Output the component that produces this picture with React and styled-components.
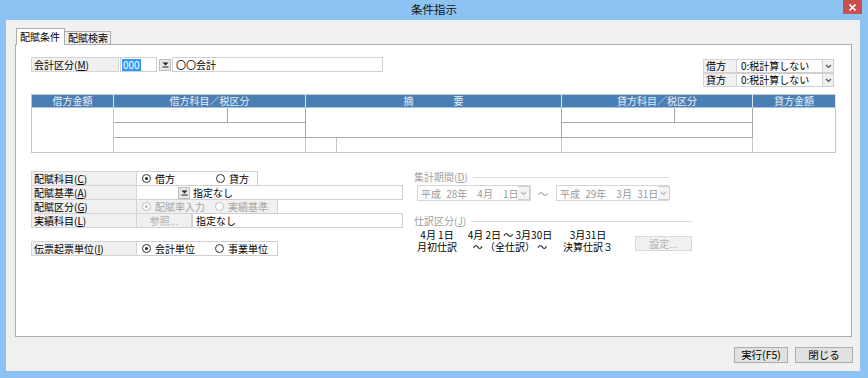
import React from "react";
import styled, { createGlobalStyle } from "styled-components";

const GlobalStyle = createGlobalStyle`
  html, body {
    margin: 0;
    padding: 0;
  }
  body {
    font-family: "Noto Sans CJK JP", "Liberation Sans", sans-serif;
    font-size: 10px;
    color: #000;
    background: #fff;
  }
  * {
    box-sizing: border-box;
  }
`;

const Window = styled.div`
  width: 868px;
  height: 378px;
  background: #8cc3f3;
  display: flex;
  flex-direction: column;
`;

const TitleBar = styled.div`
  height: 20px;
  display: grid;
  grid-template-columns: 1fr auto 1fr;
  align-items: start;
`;

const Title = styled.div`
  grid-column: 2;
  line-height: 19px;
  font-size: 11.5px;
  color: #111;
`;

const CloseButton = styled.div`
  grid-column: 3;
  justify-self: end;
  margin-right: 6px;
  width: 19px;
  height: 14px;
  background: #c75050;
  display: flex;
  align-items: center;
  justify-content: center;
`;

const Client = styled.div`
  flex: 1;
  margin: 0 8px 7px 6px;
  background: #f0f0f0;
  padding: 8px 8px 0 9px;
  display: flex;
  flex-direction: column;
`;

const TabRow = styled.div`
  display: flex;
  align-items: flex-end;
  height: 16px;
  padding-left: 1px;
`;

const Tab = styled.div`
  position: relative;
  z-index: 1;
  height: ${(p) => (p.$active ? "17px" : "13px")};
  margin-bottom: ${(p) => (p.$active ? "-1px" : "0")};
  width: ${(p) => p.$w}px;
  background: ${(p) => (p.$active ? "#fff" : "#f0f0f0")};
  border: 1px solid #adadad;
  border-bottom: none;
  border-left: ${(p) => (p.$active ? "1px solid #adadad" : "none")};
  padding-left: 3px;
  line-height: ${(p) => (p.$active ? "15px" : "12px")};
  white-space: nowrap;
`;

const Panel = styled.div`
  height: 293px;
  background: #fff;
  border: 1px solid #adadad;
  padding: 12px 16px 0 15px;
`;

const TopRow = styled.div`
  display: flex;
  justify-content: space-between;
  align-items: flex-start;
`;

const FieldRow = styled.div`
  display: flex;
  align-items: center;
  height: 15px;
`;

const LabelBox = styled.div`
  width: ${(p) => p.$w}px;
  height: ${(p) => p.$h || 15}px;
  background: #f0f0f0;
  border: 1px solid #d4d4d4;
  padding-left: 2px;
  line-height: ${(p) => (p.$h || 15) - 2}px;
  white-space: nowrap;
  flex-shrink: 0;
`;

const TextBox = styled.div`
  width: ${(p) => p.$w}px;
  height: ${(p) => p.$h || 15}px;
  margin-left: ${(p) => p.$ml || 0}px;
  background: #fff;
  border: 1px solid #cfcfcf;
  border-left-width: ${(p) => (p.$noLeft ? 0 : 1)}px;
  padding-left: ${(p) => (p.$pl === undefined ? 2 : p.$pl)}px;
  line-height: ${(p) => (p.$h || 15) - 2}px;
  display: flex;
  align-items: center;
  white-space: nowrap;
  flex-shrink: 0;
`;

const Selected = styled.span`
  background: #3399ff;
  color: #fff;
  line-height: 12px;
  padding: 0 1px;
`;

const DropButton = styled.div`
  width: 12px;
  height: 12px;
  margin-left: ${(p) => p.$ml || 0}px;
  margin-right: ${(p) => p.$mr || 0}px;
  background: #e6e6e6;
  border: 1px solid #bdbdbd;
  display: flex;
  align-items: center;
  justify-content: center;
  flex-shrink: 0;
`;

const TaxBlock = styled.div`
  margin-top: 2px;
  margin-right: 1px;
  display: flex;
  flex-direction: column;
`;

const TaxRow = styled.div`
  display: flex;
  height: 14px;
`;

const TaxSelect = styled.div`
  width: 86px;
  height: 14px;
  border: 1px solid #cfcfcf;
  border-left: none;
  padding-left: 4px;
  line-height: 12px;
  white-space: nowrap;
`;

const ArrowBox = styled.div`
  width: ${(p) => p.$w || 11}px;
  height: ${(p) => p.$h || 14}px;
  border: 1px solid #cfcfcf;
  border-left: none;
  background: ${(p) => (p.$dim ? "#f4f4f4" : "#f0f0f0")};
  display: flex;
  align-items: center;
  justify-content: center;
  flex-shrink: 0;
`;

const Grid = styled.div`
  margin-top: 7px;
  width: 804px;
  display: grid;
  grid-template-columns: 82px 114px 78px 31px 225px 113px 78px 83px;
  grid-template-rows: 13px 15px 15px 15px;
  border-left: 1px solid #c8c8c8;
  border-top: 1px solid #c8c8c8;
`;

const HeadCell = styled.div`
  grid-column: ${(p) => p.$col};
  grid-row: 1;
  background: #4a7fb4;
  color: #e6eefa;
  text-align: center;
  line-height: 12px;
  border-right: 1px solid #d8e4f0;
  border-bottom: 1px solid #a9c3dd;
  white-space: nowrap;
`;

const Cell = styled.div`
  grid-column: ${(p) => p.$col};
  grid-row: ${(p) => p.$row};
  background: #fff;
  border-right: 1px solid ${(p) => (p.$edge ? "#c8c8c8" : "#a8a8a8")};
  border-bottom: 1px solid ${(p) => (p.$edge ? "#c8c8c8" : "#a8a8a8")};
`;

const Lower = styled.div`
  margin-top: 18px;
  display: flex;
  align-items: flex-start;
`;

const LeftForm = styled.div`
  width: 372px;
  display: flex;
  flex-direction: column;
`;

const FormRow = styled.div`
  display: flex;
  height: 15px;
  flex-shrink: 0;
  margin-top: ${(p) => p.$mt || 0}px;
`;

const RadioBox = styled.div`
  width: ${(p) => p.$w}px;
  height: 15px;
  border: 1px solid #cfcfcf;
  border-left: none;
  background: ${(p) => (p.$disabled ? "#f0f0f0" : "#fff")};
  color: ${(p) => (p.$disabled ? "#a6a6a6" : "#000")};
  display: grid;
  grid-template-columns: ${(p) => p.$cols};
  align-items: center;
  padding-left: 5px;
  white-space: nowrap;
`;

const RadioItem = styled.span`
  display: inline-flex;
  align-items: center;
  gap: 4px;
  line-height: 12px;
`;

const RadioCircle = styled.span`
  width: 9px;
  height: 9px;
  border-radius: 50%;
  border: 1px solid ${(p) => (p.$disabled ? "#bdbdbd" : "#333")};
  background: #fff;
  display: inline-flex;
  align-items: center;
  justify-content: center;
  &::after {
    content: "";
    width: 3px;
    height: 3px;
    border-radius: 50%;
    background: ${(p) => (p.$checked ? (p.$disabled ? "#bdbdbd" : "#222") : "transparent")};
  }
`;

const RefButton = styled.div`
  width: 55px;
  height: 15px;
  background: #f0f0f0;
  border: 1px solid #d4d4d4;
  border-left: none;
  color: #b0b0b0;
  text-align: center;
  line-height: 13px;
  flex-shrink: 0;
`;

const RightForm = styled.div`
  margin-left: 11px;
  width: 278px;
  display: flex;
  flex-direction: column;
  color: #a0a0a0;
`;

const GroupHeader = styled.div`
  width: ${(p) => p.$w}px;
  margin-top: ${(p) => p.$mt || 0}px;
  display: flex;
  align-items: center;
  height: 12px;
  line-height: 12px;
  white-space: nowrap;
  &::after {
    content: "";
    flex: 1;
    margin-left: 5px;
    border-top: 1px solid #dcdcdc;
  }
`;

const DateRow = styled.div`
  display: flex;
  align-items: center;
  margin-top: 2px;
  margin-left: 3px;
`;

const DateSelect = styled.div`
  width: ${(p) => p.$w}px;
  height: 16px;
  border: 1px solid #d6d6d6;
  display: flex;
  align-items: center;
  padding-left: 3px;
  white-space: nowrap;
  color: #9a9a9a;
`;

const DateText = styled.span`
  flex: 1;
  word-spacing: 3px;
`;

const Tilde = styled.span`
  margin: 0 8px 0 7px;
  color: #9a9a9a;
`;

const PhaseRow = styled.div`
  display: flex;
  align-items: flex-start;
  margin-top: 2px;
  margin-left: 2px;
`;

const PhaseGrid = styled.div`
  display: grid;
  grid-template-columns: 42px 98px 52px;
  column-gap: 3px;
  color: #000;
  line-height: 12px;
  text-align: center;
  white-space: nowrap;
`;

const SetButton = styled.div`
  margin-left: auto;
  margin-top: 7px;
  width: 57px;
  height: 15px;
  background: #f0f0f0;
  border: 1px solid #dadada;
  color: #b0b0b0;
  text-align: center;
  line-height: 13px;
`;

const Footer = styled.div`
  display: flex;
  justify-content: flex-end;
  gap: 7px;
  padding-top: 10px;
  margin-right: -1px;
`;

const DialogButton = styled.div`
  width: ${(p) => p.$w}px;
  height: 16px;
  background: #e1e1e1;
  border: 1px solid #adadad;
  text-align: center;
  line-height: 14px;
  font-size: 10.5px;
`;

const Key = styled.u`
  text-underline-offset: 1px;
`;

const DropGlyph = () => (
  <svg width="7" height="7" viewBox="0 0 7 7">
    <path d="M0.5 1.5h6L3.5 4.5z" fill="#222" />
    <rect x="0.5" y="5.5" width="6" height="1" fill="#222" />
  </svg>
);

const Chevron = ({ color = "#555" }) => (
  <svg width="7" height="5" viewBox="0 0 7 5">
    <path d="M1 1l2.5 2.5L6 1" stroke={color} strokeWidth="1.2" fill="none" />
  </svg>
);

const Radio = ({ checked, disabled, children }) => (
  <RadioItem>
    <RadioCircle $checked={checked} $disabled={disabled} />
    {children}
  </RadioItem>
);

const App = () => {
  return (
    <>
      <GlobalStyle />
      <Window>
        <TitleBar>
          <Title>条件指示</Title>
          <CloseButton>
            <svg width="7" height="7" viewBox="0 0 7 7">
              <path d="M0.5 0.5l6 6M6.5 0.5l-6 6" stroke="#fff" strokeWidth="1.6" />
            </svg>
          </CloseButton>
        </TitleBar>
        <Client>
          <TabRow>
            <Tab $active $w={49}>配賦条件</Tab>
            <Tab $w={46}>配賦検索</Tab>
          </TabRow>
          <Panel>
            <TopRow>
              <FieldRow>
                <LabelBox $w={88}>
                  会計区分(<Key>M</Key>)
                </LabelBox>
                <TextBox $w={37} $ml={1} $pl={1}>
                  <Selected>000</Selected>
                </TextBox>
                <DropButton $ml={2} $mr={1}>
                  <DropGlyph />
                </DropButton>
                <TextBox $w={211} $pl={3}>〇〇会計</TextBox>
              </FieldRow>
              <TaxBlock>
                <TaxRow>
                  <LabelBox $w={34} $h={14}>借方</LabelBox>
                  <TaxSelect>0:税計算しない</TaxSelect>
                  <ArrowBox>
                    <Chevron />
                  </ArrowBox>
                </TaxRow>
                <TaxRow>
                  <LabelBox $w={34} $h={14}>貸方</LabelBox>
                  <TaxSelect>0:税計算しない</TaxSelect>
                  <ArrowBox>
                    <Chevron />
                  </ArrowBox>
                </TaxRow>
              </TaxBlock>
            </TopRow>

            <Grid>
              <HeadCell $col="1">借方金額</HeadCell>
              <HeadCell $col="2 / 4">借方科目／税区分</HeadCell>
              <HeadCell $col="4 / 6">摘　　　　要</HeadCell>
              <HeadCell $col="6 / 8">貸方科目／税区分</HeadCell>
              <HeadCell $col="8">貸方金額</HeadCell>

              <Cell $col="1" $row="2 / 5" $edge />
              <Cell $col="2" $row="2" />
              <Cell $col="3" $row="2" />
              <Cell $col="2 / 4" $row="3" />
              <Cell $col="2 / 4" $row="4" $edge />
              <Cell $col="4 / 6" $row="2 / 4" />
              <Cell $col="4" $row="4" $edge />
              <Cell $col="5" $row="4" $edge />
              <Cell $col="6" $row="2" />
              <Cell $col="7" $row="2" />
              <Cell $col="6 / 8" $row="3" />
              <Cell $col="6 / 8" $row="4" $edge />
              <Cell $col="8" $row="2 / 5" $edge />
            </Grid>

            <Lower>
              <LeftForm>
                <FormRow>
                  <LabelBox $w={106}>
                    配賦科目(<Key>C</Key>)
                  </LabelBox>
                  <RadioBox $w={121} $cols="74px 1fr">
                    <Radio checked>借方</Radio>
                    <Radio>貸方</Radio>
                  </RadioBox>
                </FormRow>
                <FormRow $mt={-1}>
                  <LabelBox $w={106}>
                    配賦基準(<Key>A</Key>)
                  </LabelBox>
                  <TextBox $w={266} $pl={41} $noLeft>
                    <DropButton $mr={3}>
                      <DropGlyph />
                    </DropButton>
                    指定なし
                  </TextBox>
                </FormRow>
                <FormRow $mt={-1}>
                  <LabelBox $w={106}>
                    配賦区分(<Key>G</Key>)
                  </LabelBox>
                  <RadioBox $w={141} $cols="73px 1fr" $disabled>
                    <Radio checked disabled>配賦率入力</Radio>
                    <Radio disabled>実績基準</Radio>
                  </RadioBox>
                </FormRow>
                <FormRow $mt={-1}>
                  <LabelBox $w={106}>
                    実績科目(<Key>L</Key>)
                  </LabelBox>
                  <RefButton>参照...</RefButton>
                  <TextBox $w={211} $pl={3}>指定なし</TextBox>
                </FormRow>
                <FormRow $mt={13}>
                  <LabelBox $w={106}>
                    伝票起票単位(<Key>I</Key>)
                  </LabelBox>
                  <RadioBox $w={141} $cols="73px 1fr">
                    <Radio checked>会計単位</Radio>
                    <Radio>事業単位</Radio>
                  </RadioBox>
                </FormRow>
              </LeftForm>

              <RightForm>
                <GroupHeader $w={255}>
                  集計期間(<Key>D</Key>)
                </GroupHeader>
                <DateRow>
                  <DateSelect $w={114}>
                    <DateText>平成 28年　4月　1日</DateText>
                    <ArrowBox $w={12} $h={14} $dim>
                      <Chevron color="#b8b8b8" />
                    </ArrowBox>
                  </DateSelect>
                  <Tilde>～</Tilde>
                  <DateSelect $w={113}>
                    <DateText>平成 29年　3月 31日</DateText>
                    <ArrowBox $w={12} $h={14} $dim>
                      <Chevron color="#b8b8b8" />
                    </ArrowBox>
                  </DateSelect>
                </DateRow>
                <GroupHeader $w={278} $mt={14}>
                  仕訳区分(<Key>J</Key>)
                </GroupHeader>
                <PhaseRow>
                  <PhaseGrid>
                    <span>4月 1日</span>
                    <span>4月 2日 ～ 3月30日</span>
                    <span>3月31日</span>
                    <span>月初仕訳</span>
                    <span>～ （全仕訳） ～</span>
                    <span>決算仕訳３</span>
                  </PhaseGrid>
                  <SetButton>設定...</SetButton>
                </PhaseRow>
              </RightForm>
            </Lower>
          </Panel>
          <Footer>
            <DialogButton $w={54}>実行(F5)</DialogButton>
            <DialogButton $w={58}>閉じる</DialogButton>
          </Footer>
        </Client>
      </Window>
    </>
  );
};

export default App;
